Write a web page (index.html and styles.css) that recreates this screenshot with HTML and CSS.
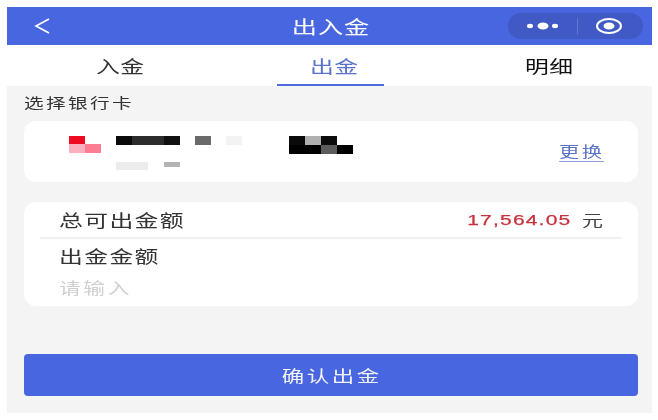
FILE: index.html
```html
<!DOCTYPE html>
<html>
<head>
    <title>出入金</title>
    <link rel="stylesheet" href="styles.css">
</head>
<body>
    <div class="screen">
        <div class="header">
            <svg class="back" width="16" height="16" viewBox="0 0 16 16">
                <path d="M15 1 L2 8 L15 15" fill="none" stroke="#fff" stroke-width="1.6"/>
            </svg>
            <div class="title"><span class="wide">出入金</span></div>
            <div class="capsule">
                <svg class="dots" width="38" height="10" viewBox="0 0 38 10">
                    <ellipse cx="4" cy="5" rx="3" ry="2.2" fill="#fff"/>
                    <ellipse cx="17" cy="5" rx="5.5" ry="3.5" fill="#fff"/>
                    <ellipse cx="29" cy="5" rx="3" ry="2.2" fill="#fff"/>
                </svg>
                <span class="capsule-line"></span>
                <svg class="target" width="30" height="18" viewBox="0 0 30 18">
                    <ellipse cx="15" cy="9" rx="12" ry="7" fill="none" stroke="#fff" stroke-width="2"/>
                    <ellipse cx="15" cy="9" rx="5.5" ry="3.5" fill="#fff"/>
                </svg>
            </div>
        </div>

        <div class="tabs">
            <div class="tab"><span class="wide">入金</span></div>
            <div class="tab active"><span class="wide">出金</span></div>
            <div class="tab dark"><span class="wide">明细</span></div>
        </div>

        <div class="main">
            <div class="section-label"><span class="wide left">选择银行卡</span></div>

            <div class="card bank-card">
                <!-- card number is pixelated in the original -->
                <svg class="mosaic" width="310" height="40" viewBox="0 0 310 40">
                    <rect x="0" y="0" width="16" height="8" fill="#ee0b22"/>
                    <rect x="0" y="8" width="16" height="9" fill="#fbb0c0"/>
                    <rect x="16" y="8" width="16" height="9" fill="#fd7c92"/>
                    <rect x="47" y="0" width="16" height="9" fill="#0a0a0a"/>
                    <rect x="63" y="0" width="32" height="9" fill="#2c2c2c"/>
                    <rect x="95" y="0" width="16" height="9" fill="#111"/>
                    <rect x="126" y="0" width="16" height="9" fill="#6a6a6a"/>
                    <rect x="157" y="0" width="16" height="9" fill="#f3f3f3"/>
                    <rect x="220" y="0" width="16" height="9" fill="#0a0a0a"/>
                    <rect x="236" y="0" width="16" height="9" fill="#b0b0b0"/>
                    <rect x="252" y="0" width="16" height="9" fill="#0c0c0c"/>
                    <rect x="220" y="9" width="32" height="9" fill="#000"/>
                    <rect x="252" y="9" width="16" height="9" fill="#5c5c5c"/>
                    <rect x="268" y="9" width="16" height="9" fill="#000"/>
                    <rect x="47" y="26" width="32" height="8" fill="#ececec"/>
                    <rect x="95" y="26" width="16" height="5" fill="#b4b4b4"/>
                </svg>
                <div class="change wide right">更换</div>
            </div>

            <div class="card amount-card">
                <div class="row total">
                    <span class="row-label wide left">总可出金额</span>
                    <span class="balance">
                        <b class="wide right">17,564.05</b>
                        <span class="wide right">元</span>
                    </span>
                </div>
                <div class="row-label withdraw"><span class="wide left">出金金额</span></div>
                <div class="placeholder"><span class="wide left">请输入</span></div>
            </div>

            <div class="confirm"><span class="wide">确认出金</span></div>
        </div>
    </div>
</body>
</html>
```

FILE: styles.css
```css
body {
    margin: 0;
    background: #fff;
    font-family: "Noto Sans CJK SC", "Liberation Sans", sans-serif;
    color: #222;
}

.screen {
    width: 645px;
    height: 406px;
    margin: 7px 6px 7px 7px;
    display: flex;
    flex-direction: column;
    filter: blur(0.45px);
}

/* the screenshot is stretched sideways, so the text is too */
.wide {
    display: inline-block;
    transform: scaleX(1.4);
}

.wide.left {
    transform-origin: left center;
}

.wide.right {
    transform-origin: right center;
}

.header {
    height: 38px;
    background: #4766e0;
    display: flex;
    align-items: center;
    justify-content: space-between;
    padding: 0 9px 0 27px;
    position: relative;
}

.title {
    position: absolute;
    left: 3px;
    right: 0;
    text-align: center;
    color: #fff;
    font-size: 18px;
    letter-spacing: 0.6px;
}

.capsule {
    width: 135px;
    height: 26px;
    box-sizing: border-box;
    padding-left: 18px;
    background: #4059c4;
    border-radius: 13px;
    display: flex;
    align-items: center;
    position: relative;
}

.capsule-line {
    width: 1px;
    height: 16px;
    margin-left: 13px;
    background: #5f78d8;
}

.target {
    margin-left: 16px;
}

.tabs {
    height: 41px;
    background: #fff;
    display: flex;
    justify-content: center;
    padding-left: 2px;
}

.tab {
    width: 108px;
    margin: 0 54px;
    padding-left: 8px;
    box-sizing: border-box;
    text-align: center;
    font-size: 17px;
    letter-spacing: 0.2px;
    line-height: 41px;
    color: #333;
}

.tab.active {
    color: #5a72c8;
    border-bottom: 2px solid #4f6ad6;
}

.tab.dark {
    color: #111;
}

.main {
    flex: 1;
    background: #f4f4f5;
    padding: 0 14px 0 17px;
    display: flex;
    flex-direction: column;
}

.section-label {
    font-size: 14px;
    letter-spacing: 1.7px;
    line-height: 20px;
    margin: 6px 0 9px 0;
    color: #333;
}

.card {
    background: #fff;
    border-radius: 12px;
}

.bank-card {
    height: 61px;
    display: flex;
    align-items: flex-start;
    justify-content: space-between;
    padding: 15px 34px 0 45px;
    box-sizing: border-box;
}

.change {
    font-size: 14.5px;
    letter-spacing: 1.6px;
    line-height: 20px;
    margin-top: 5px;
    color: #5a72c8;
    border-bottom: 1px solid #8fa0dc;
}

.amount-card {
    height: 104px;
    margin-top: 20px;
    padding: 0 16px;
}

.row {
    display: flex;
    justify-content: space-between;
    align-items: center;
    height: 35px;
    padding: 0 19px 0 19px;
    border-bottom: 2px solid #f1f1f1;
}

.row-label {
    font-size: 17px;
    letter-spacing: 1px;
    color: #333;
}

.balance {
    display: flex;
    align-items: center;
    font-size: 15px;
    color: #444;
}

.balance b {
    font-family: "Liberation Sans", sans-serif;
    font-weight: 400;
    font-size: 15px;
    letter-spacing: 0.85px;
    color: #c8323c;
    margin-right: 17px;
    -webkit-text-stroke: 0.25px #c8323c;
}

.withdraw {
    padding-left: 19px;
    line-height: 24px;
    margin-top: 5px;
}

.placeholder {
    padding-left: 19px;
    font-size: 15.5px;
    letter-spacing: 1.9px;
    line-height: 22px;
    margin-top: 8px;
    color: #cfcfcf;
}

.confirm {
    margin-top: 48px;
    height: 42px;
    line-height: 42px;
    padding-left: 2px;
    background: #4766e0;
    border-radius: 4px;
    text-align: center;
    color: #f2f2f2;
    font-size: 16px;
    letter-spacing: 1.9px;
}
```
